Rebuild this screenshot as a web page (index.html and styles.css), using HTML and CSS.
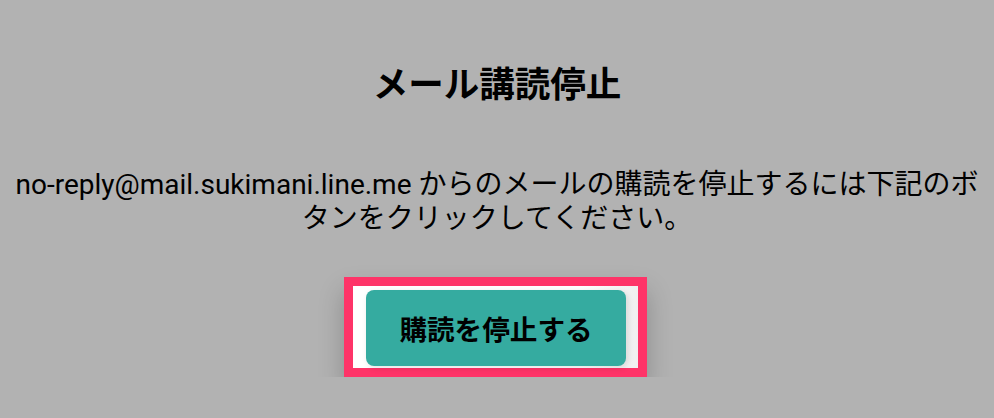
FILE: index.html
```html
<!DOCTYPE html>
<html lang="ja">
<head>
  <meta charset="UTF-8" />
  <title>メール講読停止</title>
  <meta name="viewport" content="width=device-width, initial-scale=1.0"/>
  <link rel="stylesheet" href="styles.css">
</head>
<body>

  <main class="unsubscribe">
    <h1 class="title">メール講読停止</h1>
    <p class="lead">no-reply@mail.sukimani.line.me からのメールの購読を停止するには下記のボタンをクリックしてください。</p>
    <div class="focus-box">
      <button type="button" class="stop-btn">購読を停止する</button>
    </div>
  </main>

</body>
</html>
```

FILE: styles.css
```css
body {
  margin: 0;
  background: #b2b2b2;
  color: #000;
  font-family: Roboto, "Noto Sans CJK JP", sans-serif;
}

.unsubscribe {
  padding: 64px 8px 0;
  text-align: center;
}

.title {
  margin: 0;
  font-size: 35.5px;
  line-height: 42px;
  font-weight: bold;
}

.lead {
  margin: 62px 0 0;
  font-size: 28px;
  line-height: 34px;
}

/* highlighted wrapper around the action button */
.focus-box {
  display: inline-block;
  margin: 41px 3px 0 0;
  padding: 4px 12px 2px 13px;
  border: 9px solid #fe3468;
  background: linear-gradient(90deg, #ffffff 80%, #f0f0f0);
  box-shadow: 0 14px 24px rgba(0, 0, 0, 0.22);
}

.stop-btn {
  display: block;
  width: 260px;
  height: 76px;
  padding: 0;
  border: none;
  border-radius: 8px;
  background-color: #35aba0;
  color: #000;
  font-family: Roboto, "Noto Sans CJK JP", sans-serif;
  font-size: 27.6px;
  font-weight: bold;
  cursor: pointer;
  box-shadow: 2px 2px 6px rgba(0, 0, 0, 0.12);
}
```
